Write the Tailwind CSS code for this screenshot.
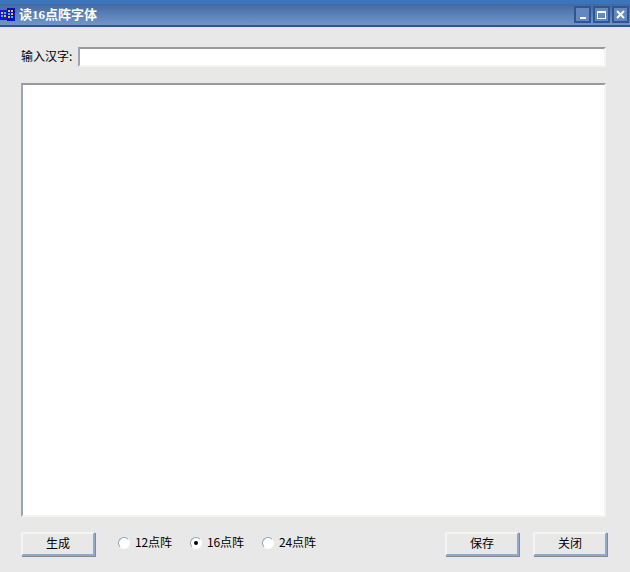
<!DOCTYPE html>
<html lang="zh">
<head>
  <meta charset="UTF-8">
  <title>读16点阵字体</title>
  <script src="https://cdn.jsdelivr.net/npm/@tailwindcss/browser@4"></script>
</head>
<body class="bg-[#e8e8e8] font-['Noto_Sans_CJK_SC','Liberation_Sans',sans-serif] text-black">
  <div class="w-[630px] h-[572px] flex flex-col overflow-hidden">

    <!-- title bar -->
    <div class="h-[27px] flex items-center bg-gradient-to-b from-[#41699f] via-[#5a80b8] to-[#7096c8] border-t-[4px] border-t-[#3a75bd] border-b-2 border-b-[#2a55a0]">
      <svg class="w-[16px] h-[16px] mt-[-1px]" viewBox="0 0 16 16">
        <rect x="0" y="4" width="9" height="10" fill="#1616d8"/>
        <rect x="7" y="2" width="8" height="13" fill="#0c0cc0"/>
        <rect x="1" y="6" width="2" height="2" fill="#f0d000"/>
        <rect x="4" y="6" width="2" height="2" fill="#20c8f0"/>
        <rect x="1" y="9" width="2" height="2" fill="#20c8f0"/>
        <rect x="4" y="9" width="2" height="2" fill="#f0d000"/>
        <rect x="8" y="4" width="2" height="2" fill="#f0d000"/>
        <rect x="11" y="4" width="2" height="2" fill="#f0d000"/>
        <rect x="8" y="7" width="2" height="2" fill="#20c8f0"/>
        <rect x="11" y="7" width="2" height="2" fill="#f0d000"/>
        <rect x="8" y="10" width="2" height="2" fill="#f0d000"/>
        <rect x="11" y="10" width="2" height="2" fill="#20c8f0"/>
        <rect x="13" y="3" width="1" height="11" fill="#000070"/>
      </svg>
      <span class="ml-[3px] text-[13px] leading-none font-bold text-white font-['Liberation_Serif','Noto_Sans_CJK_SC',serif]">读16点阵字体</span>
      <div class="ml-auto flex gap-[2px] mr-[1px]">
        <div class="w-[17px] h-[17px] border-2 border-[#2f5596] bg-[#6488bd] flex items-end justify-center pb-[2px]">
          <div class="w-[6px] h-[2px] bg-white"></div>
        </div>
        <div class="w-[17px] h-[17px] border-2 border-[#2f5596] bg-[#6488bd] flex items-center justify-center">
          <div class="w-[9px] h-[8px] border border-t-2 border-white"></div>
        </div>
        <div class="w-[17px] h-[17px] border-2 border-[#2f5596] bg-[#6488bd] flex items-center justify-center">
          <svg class="w-[9px] h-[9px]" viewBox="0 0 9 9"><path d="M1 1L8 8M8 1L1 8" stroke="#fff" stroke-width="2"/></svg>
        </div>
      </div>
    </div>

    <!-- input row -->
    <div class="flex items-center mt-[20px] ml-[21px] h-[20px]">
      <span class="w-[57px] text-[12px] leading-none mt-[-2px]">输入汉字:</span>
      <div class="w-[528px] h-[20px] bg-white border-t-2 border-l-2 border-t-[#9a9a9a] border-l-[#9aa6b8] border-b-2 border-r-2 border-b-[#f4f4f0] border-r-[#f4f4f0]"></div>
    </div>

    <!-- output area -->
    <div class="ml-[21px] mt-[16px] w-[585px] h-[434px] bg-white border-t-2 border-l-2 border-t-[#9a9a9a] border-l-[#9aa6b8] border-b-2 border-r-2 border-b-[#f4f4f0] border-r-[#f4f4f0]"></div>

    <!-- bottom row -->
    <div class="flex items-center mt-[14px] ml-[21px] h-[25px] text-[12px]">
      <button class="w-[74px] h-[24px] pb-[2px] bg-[#e8e8e8] shadow-[1px_1px_0_#8a8a8a] border-t-2 border-l-2 border-t-[#f4f4f0] border-l-[#f4f4f0] border-b-2 border-r-2 border-b-[#8fa8cc] border-r-[#8fa8cc]">生成</button>
      <div class="flex items-center ml-[23px] w-[72px]">
        <span class="w-[12px] h-[12px] mt-[-1px] rounded-full bg-white border border-t-[#8fa3bd] border-l-[#8fa3bd] border-b-white border-r-white"></span>
        <span class="ml-[5px] leading-none mt-[-3px] tracking-[-0.1px]">12点阵</span>
      </div>
      <div class="flex items-center w-[72px]">
        <span class="w-[12px] h-[12px] mt-[-1px] rounded-full bg-white border border-t-[#8fa3bd] border-l-[#8fa3bd] border-b-white border-r-white flex items-center justify-center">
          <span class="w-[4px] h-[4px] rounded-full bg-black"></span>
        </span>
        <span class="ml-[5px] leading-none mt-[-3px] tracking-[-0.1px]">16点阵</span>
      </div>
      <div class="flex items-center">
        <span class="w-[12px] h-[12px] mt-[-1px] rounded-full bg-white border border-t-[#8fa3bd] border-l-[#8fa3bd] border-b-white border-r-white"></span>
        <span class="ml-[5px] leading-none mt-[-3px] tracking-[-0.1px]">24点阵</span>
      </div>
      <button class="ml-auto w-[74px] h-[24px] pb-[2px] bg-[#e8e8e8] shadow-[1px_1px_0_#8a8a8a] border-t-2 border-l-2 border-t-[#f4f4f0] border-l-[#f4f4f0] border-b-2 border-r-2 border-b-[#8fa8cc] border-r-[#8fa8cc]">保存</button>
      <button class="ml-[14px] mr-[23px] w-[74px] h-[24px] pb-[2px] bg-[#e8e8e8] shadow-[1px_1px_0_#8a8a8a] border-t-2 border-l-2 border-t-[#f4f4f0] border-l-[#f4f4f0] border-b-2 border-r-2 border-b-[#8fa8cc] border-r-[#8fa8cc]">关闭</button>
    </div>
  </div>
</body>
</html>
